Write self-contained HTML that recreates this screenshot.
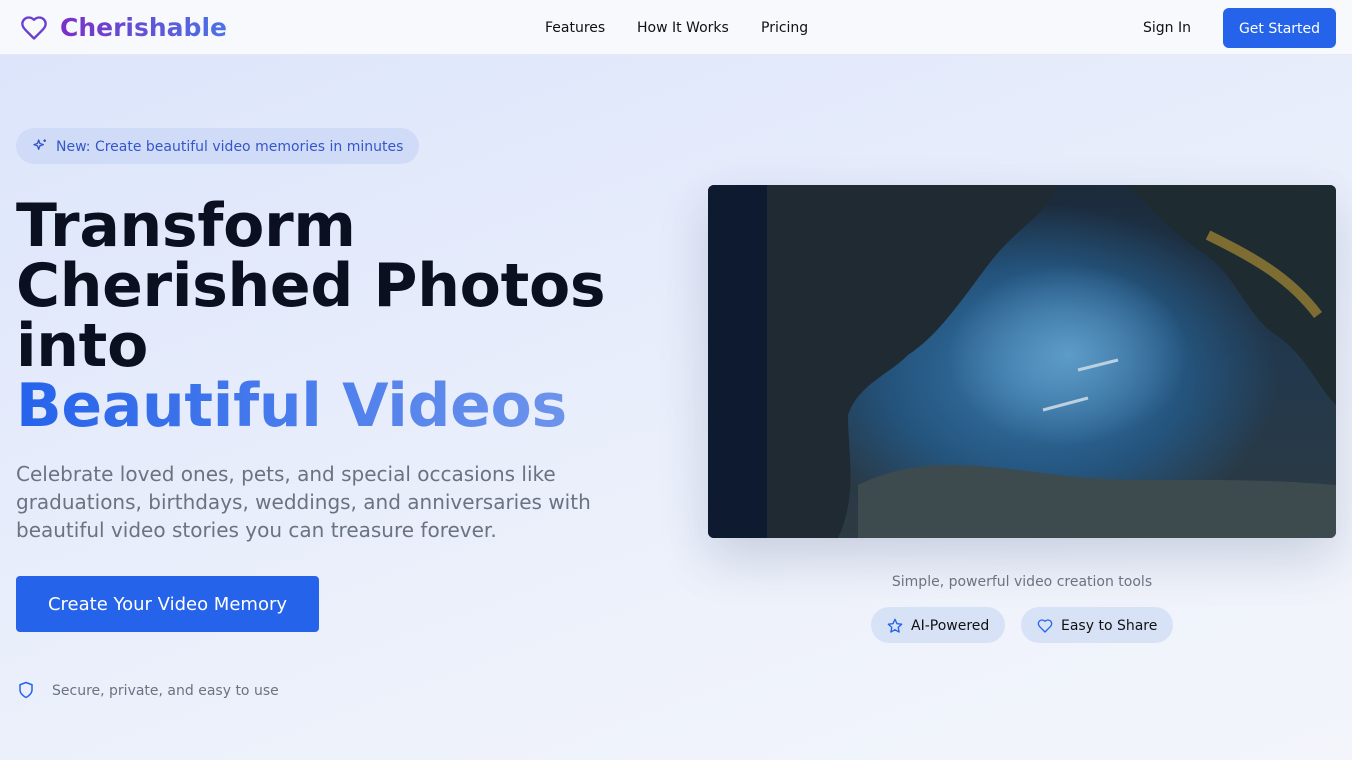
<!DOCTYPE html>
<html><head><meta charset="utf-8"><style>
*{margin:0;padding:0;box-sizing:border-box}
body{width:1352px;height:760px;overflow:hidden;font-family:"DejaVu Sans","Liberation Sans",sans-serif;background:linear-gradient(160deg,#dbe4fb 0%,#e6ecfb 40%,#eef2fb 70%,#f3f5fb 100%);position:relative;color:#0b1020}
.nav{position:absolute;left:0;top:0;width:1352px;height:55px;background:#f8f9fd;border-bottom:1px solid #e6e9f2}
.logo{position:absolute;left:20px;top:13px;display:flex;align-items:center;gap:12px}
.logo span{font-weight:bold;font-size:25px;background:linear-gradient(90deg,#7b2fc9,#4a74e6);-webkit-background-clip:text;color:transparent}
.links{position:absolute;top:20px;font-size:14px;color:#111}
.btn1{position:absolute;left:1223px;top:8px;width:113px;height:40px;background:#2563eb;color:#fff;border-radius:6px;font-size:14px;display:flex;align-items:center;justify-content:center;padding-top:1px}
.pill{position:absolute;left:16px;top:128px;height:36px;width:403px;border-radius:18px;background:#d0dcf7;color:#3556c8;font-size:14px;display:flex;align-items:center;padding-left:40px;padding-top:2px}
h1{position:absolute;left:16px;top:196px;font-size:60px;line-height:60px;font-weight:bold;letter-spacing:-0.3px}
h1 .b{background:linear-gradient(90deg,#2563eb,#6d94ec);-webkit-background-clip:text;color:transparent}
.p{position:absolute;left:16px;top:460px;width:620px;font-size:20px;line-height:28px;color:#6b7280}
.cta{position:absolute;left:16px;top:576px;width:303px;height:56px;background:#2563eb;color:#fff;border-radius:4px;font-size:18px;display:flex;align-items:center;justify-content:center}
.sec{position:absolute;left:52px;top:683px;font-size:14px;color:#6b7280}
.img{position:absolute;left:708px;top:185px;width:628px;height:353px;border-radius:6px;overflow:hidden;box-shadow:0 20px 50px rgba(30,50,100,.18);background:radial-gradient(ellipse 120px 90px at 360px 170px,#5d9bc8,transparent),radial-gradient(ellipse 240px 170px at 330px 190px,#3a78aa 0%,#24557f 60%,transparent 100%),linear-gradient(180deg,#1b2b3c,#22384d 50%,#2d3b42)}
.img .strip{position:absolute;left:0;top:0;width:59px;height:100%;background:#0e1a30}
.cap{position:absolute;left:708px;width:628px;top:574px;text-align:center;font-size:14px;color:#6b7280}
.tag{position:absolute;top:607px;height:36px;border-radius:18px;background:#d8e2f7;font-size:14px;display:flex;align-items:center;gap:8px;padding-left:16px;color:#111;padding-top:2px}
</style></head><body>
<div class="nav">
<div class="logo"><svg width="28" height="28" viewBox="0 0 24 24" fill="none" stroke="#6a3fd0" stroke-width="2" stroke-linecap="round" stroke-linejoin="round"><path d="M19 14c1.5-1.5 3-3.2 3-5.5A5.5 5.5 0 0 0 16.5 3c-1.8 0-3 .5-4.5 2-1.5-1.5-2.7-2-4.5-2A5.5 5.5 0 0 0 2 8.5c0 2.3 1.5 4 3 5.5l7 7Z"/></svg><span>Cherishable</span></div>
<div class="links" style="left:545px">Features</div>
<div class="links" style="left:637px">How It Works</div>
<div class="links" style="left:761px">Pricing</div>
<div class="links" style="left:1143px">Sign In</div>
<div class="btn1">Get Started</div>
</div>
<div class="pill"><svg style="position:absolute;left:16px;top:10px" width="16" height="16" viewBox="0 0 24 24" fill="none" stroke="#3556c8" stroke-width="2" stroke-linejoin="round"><path d="M10 3l1.8 5.2L17 10l-5.2 1.8L10 17l-1.8-5.2L3 10l5.2-1.8Z"/><path d="M19 2v4M17 4h4"/></svg>New: Create beautiful video memories in minutes</div>
<h1>Transform<br>Cherished Photos<br>into<br><span class="b">Beautiful Videos</span></h1>
<div class="p">Celebrate loved ones, pets, and special occasions like graduations, birthdays, weddings, and anniversaries with beautiful video stories you can treasure forever.</div>
<div class="cta">Create Your Video Memory</div>
<svg style="position:absolute;left:17px;top:681px" width="18" height="18" viewBox="0 0 24 24" fill="none" stroke="#2563eb" stroke-width="2" stroke-linejoin="round"><path d="M12 22s8-4 8-10V5l-8-3-8 3v7c0 6 8 10 8 10z"/></svg>
<div class="sec">Secure, private, and easy to use</div>
<div class="img"><div class="strip"></div>
<svg width="628" height="353" style="position:absolute;left:0;top:0"><path d="M59 0H350c-10 30 -40 40 -70 80 -30 40 -50 70 -80 90 -20 20 -50 30 -60 60 0 40 10 80 -10 123H59Z" fill="#1f2a33"/><path d="M420 0H628V220c-20-20-30-50-60-70-30-20-40-60-70-80-30-20-50-40-78-70Z" fill="#1e2b30"/><path d="M150 300c60-30 120-20 200-10 80 10 160 0 278 10V353H150Z" fill="#3d4b4f"/><path d="M500 50c40 20 80 40 110 80" stroke="#a58a35" stroke-width="10" fill="none" opacity=".7"/><path d="M370 185l40-10M335 225l45-12" stroke="#bcd0e0" stroke-width="3"/></svg>
</div>
<div class="cap">Simple, powerful video creation tools</div>
<div class="tag" style="left:871px;width:134px"><svg width="16" height="16" viewBox="0 0 24 24" fill="none" stroke="#2563eb" stroke-width="2" stroke-linejoin="round"><path d="M12 2l3 6.5 7 .8-5.2 4.8 1.4 7L12 17.6 5.8 21.1l1.4-7L2 9.3l7-.8Z"/></svg>AI-Powered</div>
<div class="tag" style="left:1021px;width:152px"><svg width="16" height="16" viewBox="0 0 24 24" fill="none" stroke="#2563eb" stroke-width="2" stroke-linejoin="round"><path d="M19 14c1.5-1.5 3-3.2 3-5.5A5.5 5.5 0 0 0 16.5 3c-1.8 0-3 .5-4.5 2-1.5-1.5-2.7-2-4.5-2A5.5 5.5 0 0 0 2 8.5c0 2.3 1.5 4 3 5.5l7 7Z"/></svg>Easy to Share</div>
</body></html>
